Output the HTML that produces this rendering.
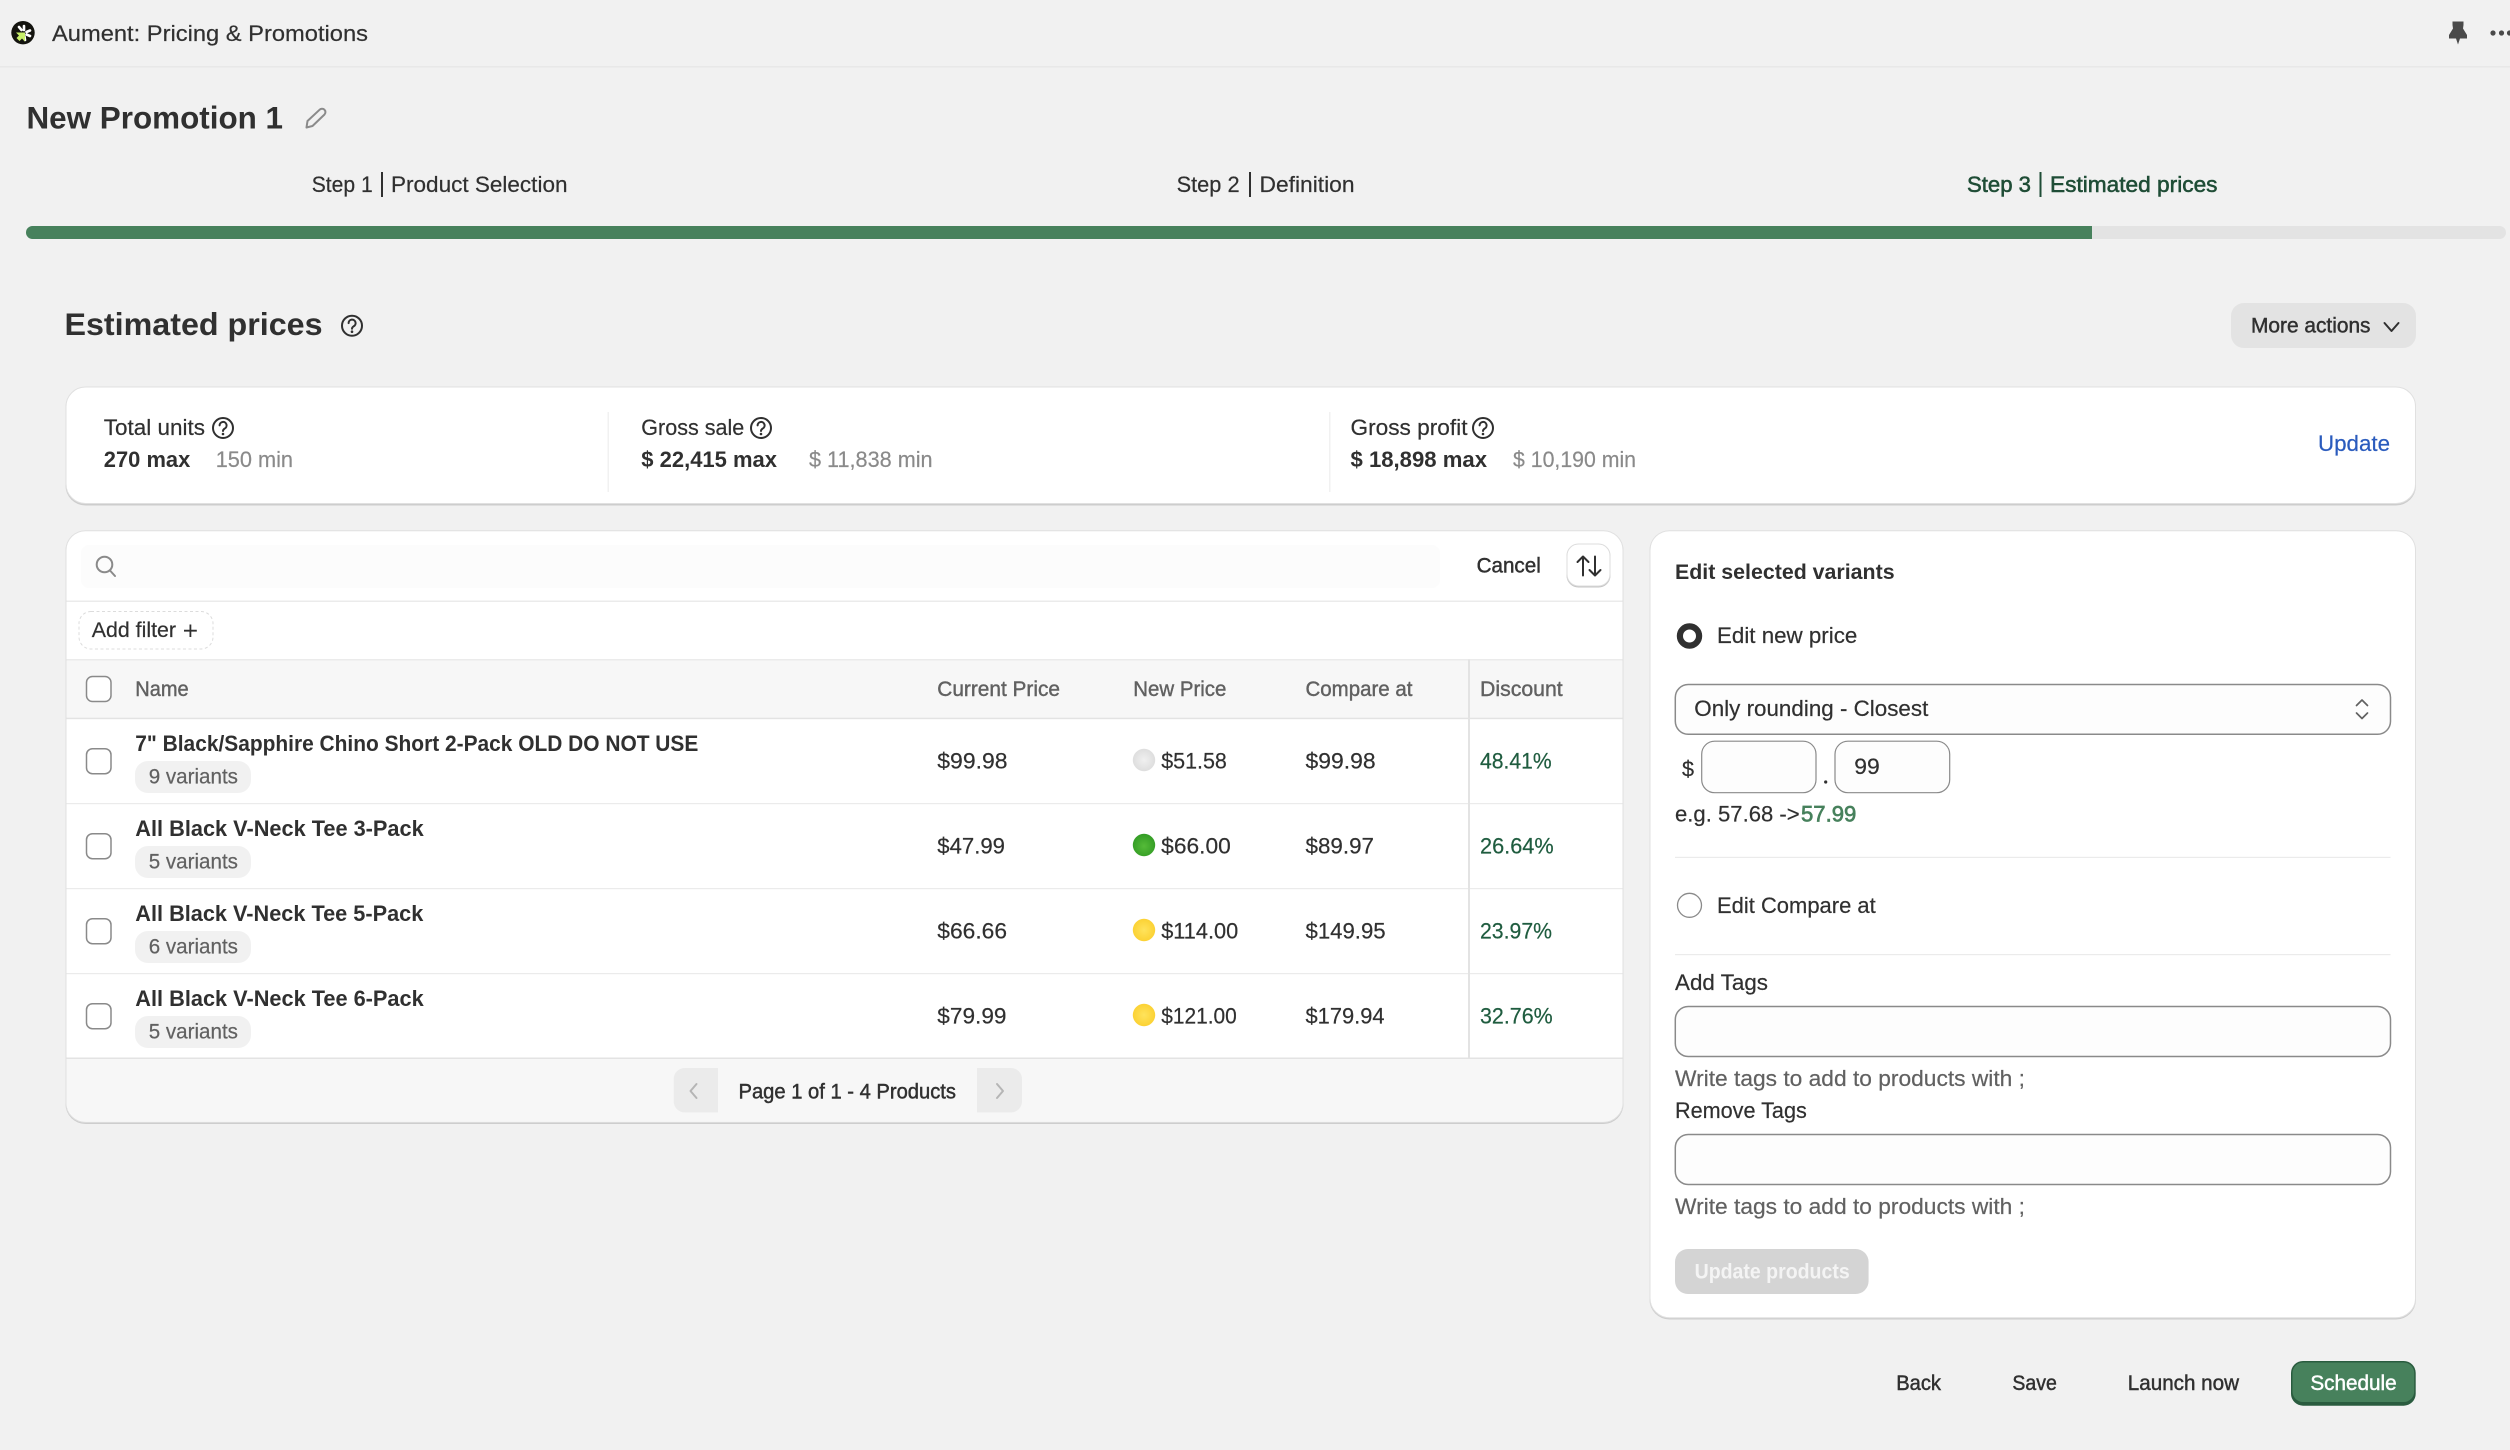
<!DOCTYPE html>
<html lang="en">
<head>
<meta charset="utf-8">
<title>Aument: Pricing &amp; Promotions</title>
<style>
html,body{margin:0;padding:0;background:#f1f1f1;width:2510px;height:1450px;overflow:hidden}
svg{display:block}
text{font-family:"Liberation Sans",Arial,sans-serif;font-size:22.5px;fill:#303030;stroke:#303030;stroke-width:.2;white-space:pre}
.b{font-weight:700;stroke:none}
.m{stroke:#303030;stroke-width:.45}
.s{font-size:21px}
.g{fill:#616161;stroke:#616161}
.gm{fill:#616161;stroke:#616161;stroke-width:.4}
.l{fill:#8a8a8a;stroke:#8a8a8a}
.d{fill:#1f5c3f;stroke:#1f5c3f}
.ic{fill:none;stroke:#303030;stroke-width:2;stroke-linecap:round;stroke-linejoin:round}
.cb{fill:#fff;stroke:#8a8a8a;stroke-width:1.5}
.ip{fill:#fdfdfd;stroke:#8a8a8a;stroke-width:1.5}
</style>
</head>
<body>
<svg width="2510" height="1450" viewBox="0 0 2510 1450" xmlns="http://www.w3.org/2000/svg">
<defs>
<radialGradient id="gy" cx="50%" cy="50%" r="55%"><stop offset="0" stop-color="#f0f0f0"/><stop offset="1" stop-color="#dcdcdc"/></radialGradient>
<radialGradient id="gg" cx="50%" cy="55%" r="55%"><stop offset="0" stop-color="#55bb38"/><stop offset="1" stop-color="#339c25"/></radialGradient>
<radialGradient id="gl" cx="50%" cy="50%" r="55%"><stop offset="0" stop-color="#ffe35c"/><stop offset="1" stop-color="#fbd030"/></radialGradient>
</defs>
<rect width="2510" height="1450" fill="#f1f1f1"/>

<!-- top bar -->
<rect x="0" y="66" width="2510" height="1.5" fill="#e8e8e8"/>
<circle cx="23" cy="32.7" r="11.7" fill="#14140f"/>
<g stroke="#fff" stroke-width="2.6" stroke-linecap="round">
<path d="M24 26V30M30 30.5L26.5 32M30 36L26.5 34.5M25 40L24.5 36.5M19 27L21.5 30"/>
</g>
<path d="M16 32.5H25V41.5L22 38.5L19.5 41L16.5 38L19 35.5Z" fill="#c8f06a"/>
<text x="52" y="41" textLength="316" lengthAdjust="spacingAndGlyphs">Aument: Pricing &amp; Promotions</text>
<path d="M2452.5 21.5H2463.5V25L2463 28.5L2467 35V38.5H2460L2458 44.5L2456 38.5H2449V35L2453 28.5L2452.5 25Z" fill="#4a4a4a"/>
<circle cx="2493" cy="33" r="2.6" fill="#4a4a4a"/><circle cx="2501.5" cy="33" r="2.6" fill="#4a4a4a"/><circle cx="2509.5" cy="33" r="2.6" fill="#4a4a4a"/>

<!-- title -->
<text class="b" x="26.5" y="128.3" style="font-size:31.5px" textLength="256.5" lengthAdjust="spacingAndGlyphs">New Promotion 1</text>
<path d="M306.5 127.5L307.5 121L319.5 109.8A3 3 0 0 1 324.5 114.5L312.5 126Z" fill="none" stroke="#8a8a8a" stroke-width="2" stroke-linejoin="round"/>

<!-- steps -->
<text x="311.7" y="192" textLength="61" lengthAdjust="spacingAndGlyphs">Step 1</text>
<rect x="381" y="172" width="2" height="25" fill="#303030"/>
<text x="391" y="192" textLength="176.5" lengthAdjust="spacingAndGlyphs">Product Selection</text>
<text x="1176.6" y="192" textLength="63" lengthAdjust="spacingAndGlyphs">Step 2</text>
<rect x="1249" y="172" width="2" height="25" fill="#303030"/>
<text x="1259.5" y="192" textLength="95" lengthAdjust="spacingAndGlyphs">Definition</text>
<text x="1967" y="192" textLength="64" lengthAdjust="spacingAndGlyphs" style="fill:#1f4d36;stroke:#1f4d36;stroke-width:.55">Step 3</text>
<rect x="2039.5" y="172" width="2" height="25" fill="#1f4d36"/>
<text x="2050" y="192" textLength="167.5" lengthAdjust="spacingAndGlyphs" style="fill:#1f4d36;stroke:#1f4d36;stroke-width:.55">Estimated prices</text>

<!-- progress -->
<rect x="26" y="226" width="2480" height="13" rx="6.5" fill="#e3e3e3"/>
<path d="M32.5 226H2092V239H32.5A6.5 6.5 0 0 1 32.5 226Z" fill="#47815c"/>

<!-- section heading -->
<text class="b" x="64.5" y="335" style="font-size:31.5px" textLength="258" lengthAdjust="spacingAndGlyphs">Estimated prices</text>
<g transform="translate(352 325.7)"><circle r="10" class="ic"/><path class="ic" d="M-3.4 -2.6A3.5 3.5 0 1 1 1.6 .6C.5 1.3 0 1.8 0 3"/><circle cy="6" r="1.3" fill="#303030"/></g>
<rect x="2231" y="303" width="185" height="45" rx="13" fill="#e3e3e3"/>
<text class="m s" x="2251" y="332.5" textLength="119.5" lengthAdjust="spacingAndGlyphs">More actions</text>
<path class="ic" d="M2384.5 323L2391.5 331L2398.5 323"/>

<!-- summary card -->
<rect x="65.5" y="387.5" width="2350.5" height="118" rx="20" fill="#cdcdcd"/>
<rect x="66" y="387" width="2349.5" height="116.5" rx="19.5" fill="#fff" stroke="#e0e0e0" stroke-width="1"/>
<text x="103.8" y="435" textLength="101.2" lengthAdjust="spacingAndGlyphs">Total units</text>
<g transform="translate(223 428)"><circle r="10" class="ic"/><path class="ic" d="M-3.4 -2.6A3.5 3.5 0 1 1 1.6 .6C.5 1.3 0 1.8 0 3"/><circle cy="6" r="1.3" fill="#303030"/></g>
<text class="b" x="103.8" y="467" textLength="86.5" lengthAdjust="spacingAndGlyphs">270 max</text>
<text class="l" x="215.7" y="467" textLength="77.3" lengthAdjust="spacingAndGlyphs">150 min</text>
<rect x="607.5" y="412" width="1.5" height="80" fill="#f1f1f1"/>
<text x="641.3" y="435" textLength="103" lengthAdjust="spacingAndGlyphs">Gross sale</text>
<g transform="translate(761 428)"><circle r="10" class="ic"/><path class="ic" d="M-3.4 -2.6A3.5 3.5 0 1 1 1.6 .6C.5 1.3 0 1.8 0 3"/><circle cy="6" r="1.3" fill="#303030"/></g>
<text class="b" x="641.3" y="467" textLength="135.7" lengthAdjust="spacingAndGlyphs">$ 22,415 max</text>
<text class="l" x="809" y="467" textLength="123.6" lengthAdjust="spacingAndGlyphs">$ 11,838 min</text>
<rect x="1329" y="412" width="1.5" height="80" fill="#f1f1f1"/>
<text x="1350.5" y="435" textLength="117" lengthAdjust="spacingAndGlyphs">Gross profit</text>
<g transform="translate(1483 428)"><circle r="10" class="ic"/><path class="ic" d="M-3.4 -2.6A3.5 3.5 0 1 1 1.6 .6C.5 1.3 0 1.8 0 3"/><circle cy="6" r="1.3" fill="#303030"/></g>
<text class="b" x="1350.5" y="467" textLength="136.5" lengthAdjust="spacingAndGlyphs">$ 18,898 max</text>
<text class="l" x="1513" y="467" textLength="123" lengthAdjust="spacingAndGlyphs">$ 10,190 min</text>
<text x="2318" y="451" textLength="72" lengthAdjust="spacingAndGlyphs" style="fill:#2a5bbd;stroke:#2a5bbd">Update</text>

<!-- table card -->
<rect x="65.5" y="531" width="1558" height="593" rx="20" fill="#cdcdcd"/>
<rect x="66" y="530.7" width="1557" height="591.5" rx="19.5" fill="#fff" stroke="#e0e0e0" stroke-width="1"/>
<rect x="81" y="545" width="1359" height="43" rx="8" fill="#fcfcfc"/>
<circle cx="104.5" cy="564.5" r="7.8" fill="none" stroke="#8a8a8a" stroke-width="2"/>
<path d="M110 570.5L115 576" stroke="#8a8a8a" stroke-width="2" stroke-linecap="round"/>
<text class="m s" x="1476.6" y="572.6" textLength="64.2" lengthAdjust="spacingAndGlyphs">Cancel</text>
<rect x="1566.5" y="544.5" width="44" height="43" rx="12" fill="#c4c4c4"/>
<rect x="1567" y="544" width="43" height="42" rx="11.5" fill="#fff" stroke="#dcdcdc" stroke-width="1"/>
<path class="ic" d="M1583 575.5V556.5M1577.5 562L1583 556.5L1588.5 562M1595 556.5V575.5M1589.5 570L1595 575.5L1600.5 570"/>
<rect x="66.5" y="600.5" width="1556" height="1.5" fill="#ebebeb"/>

<rect x="79" y="611.5" width="134" height="37.5" rx="12" fill="#fff" stroke="#dcdcdc" stroke-width="1" stroke-dasharray="3 2.5"/>
<text class="s" x="91.8" y="637.2" textLength="84.2" lengthAdjust="spacingAndGlyphs">Add filter</text>
<path d="M190.4 624.5V637M184 630.7H196.8" stroke="#303030" stroke-width="1.8" fill="none"/>

<rect x="66.5" y="659.5" width="1556" height="59" fill="#f7f7f7"/>
<rect x="66.5" y="659" width="1556" height="1.5" fill="#ebebeb"/>
<rect x="66.5" y="717.7" width="1556" height="1.5" fill="#e3e3e3"/>
<rect x="86.5" y="676.5" width="24.5" height="25" rx="6" class="cb"/>
<text class="gm s" x="135.3" y="695.8" textLength="53.4" lengthAdjust="spacingAndGlyphs">Name</text>
<text class="gm s" x="937.3" y="695.8" textLength="122.7" lengthAdjust="spacingAndGlyphs">Current Price</text>
<text class="gm s" x="1133.3" y="695.8" textLength="93.1" lengthAdjust="spacingAndGlyphs">New Price</text>
<text class="gm s" x="1305.5" y="695.8" textLength="106.9" lengthAdjust="spacingAndGlyphs">Compare at</text>
<text class="gm s" x="1480" y="695.8" textLength="82.7" lengthAdjust="spacingAndGlyphs">Discount</text>

<!-- row separators -->
<rect x="66.5" y="803" width="1556" height="1.2" fill="#ebebeb"/>
<rect x="66.5" y="888" width="1556" height="1.2" fill="#ebebeb"/>
<rect x="66.5" y="973" width="1556" height="1.2" fill="#ebebeb"/>

<!-- footer -->
<path d="M66.5 1058H1622.5V1102A19.5 19.5 0 0 1 1603 1121.7H86A19.5 19.5 0 0 1 66.5 1102Z" fill="#f7f7f7"/>
<rect x="66.5" y="1057.5" width="1556" height="1.5" fill="#e3e3e3"/>
<rect x="1468" y="659.5" width="2" height="398.5" fill="#e3e3e3"/>
<path d="M684.7 1068H718V1112.4H684.7A11 11 0 0 1 673.7 1101.4V1079A11 11 0 0 1 684.7 1068Z" fill="#ebebeb"/>
<path d="M696.5 1084L690.5 1091L696.5 1098" fill="none" stroke="#b5b5b5" stroke-width="2" stroke-linecap="round" stroke-linejoin="round"/>
<text class="m s" x="738.5" y="1098.5" textLength="217.5" lengthAdjust="spacingAndGlyphs">Page 1 of 1 - 4 Products</text>
<path d="M977 1068H1011A11 11 0 0 1 1022 1079V1101.4A11 11 0 0 1 1011 1112.4H977Z" fill="#ebebeb"/>
<path d="M997 1084L1003 1091L997 1098" fill="none" stroke="#b5b5b5" stroke-width="2" stroke-linecap="round" stroke-linejoin="round"/>

<!-- row 1 -->
<rect x="86.5" y="748.7" width="24.5" height="25" rx="6" class="cb"/>
<text class="b" x="135.3" y="751.2" style="font-size:22px" textLength="563" lengthAdjust="spacingAndGlyphs">7" Black/Sapphire Chino Short 2-Pack OLD DO NOT USE</text>
<rect x="135" y="761" width="116" height="32" rx="13" fill="#f1f1f1"/>
<text class="g s" x="148.7" y="783.3" textLength="89.3" lengthAdjust="spacingAndGlyphs">9 variants</text>
<text x="937.3" y="768.3" textLength="70.2" lengthAdjust="spacingAndGlyphs">$99.98</text>
<circle cx="1144" cy="760" r="11.2" fill="url(#gy)"/>
<text x="1161.2" y="768.3" textLength="65.7" lengthAdjust="spacingAndGlyphs">$51.58</text>
<text x="1305.5" y="768.3" textLength="70.1" lengthAdjust="spacingAndGlyphs">$99.98</text>
<text class="d" x="1480" y="768.3" textLength="71.7" lengthAdjust="spacingAndGlyphs">48.41%</text>

<!-- row 2 -->
<rect x="86.5" y="833.7" width="24.5" height="25" rx="6" class="cb"/>
<text class="b" x="135.3" y="836.2" style="font-size:22px" textLength="288.4" lengthAdjust="spacingAndGlyphs">All Black V-Neck Tee 3-Pack</text>
<rect x="135" y="846" width="116" height="32" rx="13" fill="#f1f1f1"/>
<text class="g s" x="148.7" y="868.3" textLength="89.3" lengthAdjust="spacingAndGlyphs">5 variants</text>
<text x="937.3" y="853.3" textLength="67.7" lengthAdjust="spacingAndGlyphs">$47.99</text>
<circle cx="1144" cy="845" r="11.2" fill="url(#gg)"/>
<text x="1161.2" y="853.3" textLength="69.6" lengthAdjust="spacingAndGlyphs">$66.00</text>
<text x="1305.5" y="853.3" textLength="68.5" lengthAdjust="spacingAndGlyphs">$89.97</text>
<text class="d" x="1480" y="853.3" textLength="73.7" lengthAdjust="spacingAndGlyphs">26.64%</text>

<!-- row 3 -->
<rect x="86.5" y="918.7" width="24.5" height="25" rx="6" class="cb"/>
<text class="b" x="135.3" y="921.2" style="font-size:22px" textLength="288" lengthAdjust="spacingAndGlyphs">All Black V-Neck Tee 5-Pack</text>
<rect x="135" y="931" width="116" height="32" rx="13" fill="#f1f1f1"/>
<text class="g s" x="148.7" y="953.3" textLength="89.3" lengthAdjust="spacingAndGlyphs">6 variants</text>
<text x="937.3" y="938.3" textLength="69.7" lengthAdjust="spacingAndGlyphs">$66.66</text>
<circle cx="1144" cy="930" r="11.2" fill="url(#gl)"/>
<text x="1161.2" y="938.3" textLength="77.1" lengthAdjust="spacingAndGlyphs">$114.00</text>
<text x="1305.5" y="938.3" textLength="80.1" lengthAdjust="spacingAndGlyphs">$149.95</text>
<text class="d" x="1480" y="938.3" textLength="72" lengthAdjust="spacingAndGlyphs">23.97%</text>

<!-- row 4 -->
<rect x="86.5" y="1003.7" width="24.5" height="25" rx="6" class="cb"/>
<text class="b" x="135.3" y="1006.2" style="font-size:22px" textLength="288.4" lengthAdjust="spacingAndGlyphs">All Black V-Neck Tee 6-Pack</text>
<rect x="135" y="1016" width="116" height="32" rx="13" fill="#f1f1f1"/>
<text class="g s" x="148.7" y="1038.3" textLength="89.3" lengthAdjust="spacingAndGlyphs">5 variants</text>
<text x="937.3" y="1023.3" textLength="69.2" lengthAdjust="spacingAndGlyphs">$79.99</text>
<circle cx="1144" cy="1015" r="11.2" fill="url(#gl)"/>
<text x="1161.2" y="1023.3" textLength="75.6" lengthAdjust="spacingAndGlyphs">$121.00</text>
<text x="1305.5" y="1023.3" textLength="79.1" lengthAdjust="spacingAndGlyphs">$179.94</text>
<text class="d" x="1480" y="1023.3" textLength="72.7" lengthAdjust="spacingAndGlyphs">32.76%</text>

<!-- edit card -->
<rect x="1649.5" y="531" width="766.5" height="788.5" rx="20" fill="#cdcdcd"/>
<rect x="1650" y="530.7" width="765.5" height="787" rx="19.5" fill="#fff" stroke="#e0e0e0" stroke-width="1"/>
<text class="b" x="1675" y="579" style="font-size:21px" textLength="219.6" lengthAdjust="spacingAndGlyphs">Edit selected variants</text>

<circle cx="1689.5" cy="636" r="9.6" fill="#fff" stroke="#303030" stroke-width="6.2"/>
<text x="1717" y="643" textLength="140.3" lengthAdjust="spacingAndGlyphs">Edit new price</text>

<rect x="1675.3" y="684.5" width="715.2" height="49.8" rx="13" class="ip"/>
<text x="1694.3" y="716" textLength="234" lengthAdjust="spacingAndGlyphs">Only rounding - Closest</text>
<path d="M2356.5 705.5L2362 700L2367.5 705.5M2356.5 713L2362 718.5L2367.5 713" fill="none" stroke="#616161" stroke-width="1.7" stroke-linecap="round" stroke-linejoin="round"/>

<text x="1682" y="776.7" textLength="12" lengthAdjust="spacingAndGlyphs">$</text>
<rect x="1701.7" y="741.2" width="114.3" height="51.5" rx="13" fill="#fdfdfd" stroke="#8a8a8a" stroke-width="1.2"/>
<circle cx="1825.7" cy="782" r="1.6" fill="#303030"/>
<rect x="1835" y="741.2" width="114.7" height="51.5" rx="13" fill="#fdfdfd" stroke="#8a8a8a" stroke-width="1.2"/>
<text x="1854.3" y="774" textLength="25.5" lengthAdjust="spacingAndGlyphs">99</text>

<text x="1675" y="821.7" textLength="124.7" lengthAdjust="spacingAndGlyphs">e.g. 57.68 -&gt;</text>
<text x="1801" y="821.7" textLength="55.3" lengthAdjust="spacingAndGlyphs" style="fill:#47815c;stroke:#47815c;stroke-width:.7">57.99</text>
<rect x="1675" y="856.8" width="715.5" height="1.2" fill="#ebebeb"/>

<circle cx="1689.5" cy="905.3" r="12" fill="#fff" stroke="#8a8a8a" stroke-width="1.3"/>
<text x="1717" y="913" textLength="158.7" lengthAdjust="spacingAndGlyphs">Edit Compare at</text>
<rect x="1675" y="954" width="715.5" height="1.2" fill="#ebebeb"/>

<text x="1675" y="990" textLength="93" lengthAdjust="spacingAndGlyphs">Add Tags</text>
<rect x="1675.3" y="1006.5" width="715.2" height="50" rx="13" class="ip"/>
<text class="g" x="1675" y="1086" textLength="350" lengthAdjust="spacingAndGlyphs">Write tags to add to products with ;</text>
<text x="1675" y="1118" textLength="131.8" lengthAdjust="spacingAndGlyphs">Remove Tags</text>
<rect x="1675.3" y="1134.5" width="715.2" height="50" rx="13" class="ip"/>
<text class="g" x="1675" y="1214" textLength="350" lengthAdjust="spacingAndGlyphs">Write tags to add to products with ;</text>

<rect x="1675" y="1249" width="193.6" height="45" rx="13" fill="#d4d4d4"/>
<text class="b s" x="1694.6" y="1278.3" textLength="155.1" lengthAdjust="spacingAndGlyphs" style="fill:#f4f4f4">Update products</text>

<!-- bottom actions -->
<text class="m s" x="1896.2" y="1390" textLength="44.8" lengthAdjust="spacingAndGlyphs">Back</text>
<text class="m s" x="2012.4" y="1390" textLength="44.4" lengthAdjust="spacingAndGlyphs">Save</text>
<text class="m s" x="2127.8" y="1390" textLength="111.2" lengthAdjust="spacingAndGlyphs">Launch now</text>
<rect x="2291" y="1361" width="124.7" height="44.7" rx="12" fill="#2a5c3f"/>
<rect x="2292.5" y="1362.5" width="121.7" height="39.5" rx="10.5" fill="#47815c"/>
<text x="2310.4" y="1390" class="s" textLength="86.2" lengthAdjust="spacingAndGlyphs" style="fill:#fff;stroke:#fff;stroke-width:.45">Schedule</text>
</svg>
</body>
</html>
